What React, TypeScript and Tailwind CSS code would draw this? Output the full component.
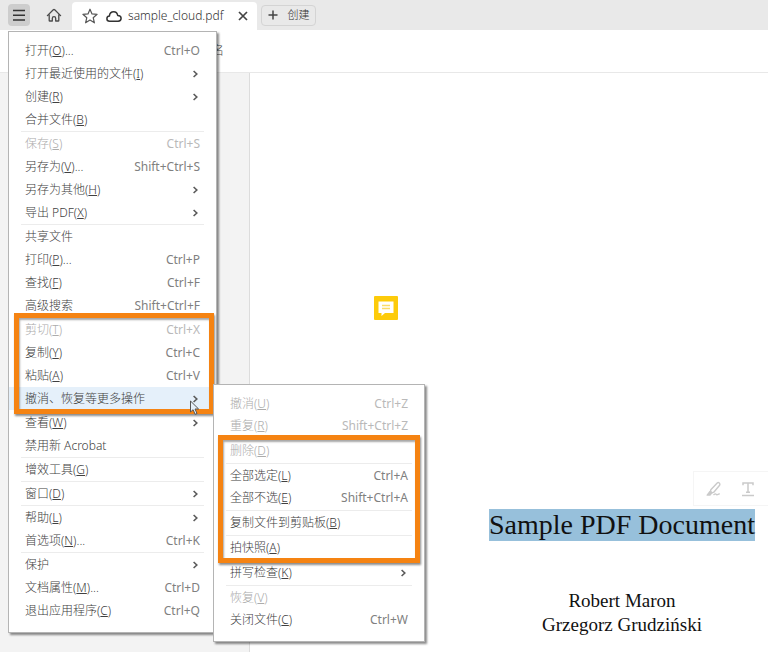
import React from 'react';
import { clsx } from 'clsx';

interface MenuEntry {
  label: string;
  accessKey?: string;
  suffix?: string;
  shortcut?: string;
  submenu?: boolean;
  disabled?: boolean;
  active?: boolean;
}

const fileMenu: MenuEntry[][] = [
  [
    { label: '打开', accessKey: 'O', suffix: '...', shortcut: 'Ctrl+O' },
    { label: '打开最近使用的文件', accessKey: 'I', submenu: true },
    { label: '创建', accessKey: 'R', submenu: true },
    { label: '合并文件', accessKey: 'B' },
  ],
  [
    { label: '保存', accessKey: 'S', shortcut: 'Ctrl+S', disabled: true },
    { label: '另存为', accessKey: 'V', suffix: '...', shortcut: 'Shift+Ctrl+S' },
    { label: '另存为其他', accessKey: 'H', submenu: true },
    { label: '导出 PDF', accessKey: 'X', submenu: true },
  ],
  [
    { label: '共享文件' },
    { label: '打印', accessKey: 'P', suffix: '...', shortcut: 'Ctrl+P' },
    { label: '查找', accessKey: 'F', shortcut: 'Ctrl+F' },
    { label: '高级搜索', shortcut: 'Shift+Ctrl+F' },
  ],
  [
    { label: '剪切', accessKey: 'T', shortcut: 'Ctrl+X', disabled: true },
    { label: '复制', accessKey: 'Y', shortcut: 'Ctrl+C' },
    { label: '粘贴', accessKey: 'A', shortcut: 'Ctrl+V' },
    { label: '撤消、恢复等更多操作', submenu: true, active: true },
  ],
  [
    { label: '查看', accessKey: 'W', submenu: true },
    { label: '禁用新 Acrobat' },
  ],
  [{ label: '增效工具', accessKey: 'G' }],
  [{ label: '窗口', accessKey: 'D', submenu: true }],
  [
    { label: '帮助', accessKey: 'L', submenu: true },
    { label: '首选项', accessKey: 'N', suffix: '...', shortcut: 'Ctrl+K' },
  ],
  [
    { label: '保护', submenu: true },
    { label: '文档属性', accessKey: 'M', suffix: '...', shortcut: 'Ctrl+D' },
    { label: '退出应用程序', accessKey: 'C', shortcut: 'Ctrl+Q' },
  ],
];

const editMenu: MenuEntry[][] = [
  [
    { label: '撤消', accessKey: 'U', shortcut: 'Ctrl+Z', disabled: true },
    { label: '重复', accessKey: 'R', shortcut: 'Shift+Ctrl+Z', disabled: true },
  ],
  [{ label: '删除', accessKey: 'D', disabled: true }],
  [
    { label: '全部选定', accessKey: 'L', shortcut: 'Ctrl+A' },
    { label: '全部不选', accessKey: 'E', shortcut: 'Shift+Ctrl+A' },
  ],
  [{ label: '复制文件到剪贴板', accessKey: 'B' }],
  [{ label: '拍快照', accessKey: 'A' }],
  [{ label: '拼写检查', accessKey: 'K', submenu: true }],
  [
    { label: '恢复', accessKey: 'V', disabled: true },
    { label: '关闭文件', accessKey: 'C', shortcut: 'Ctrl+W' },
  ],
];

const MenuItem: React.FC<{ entry: MenuEntry; rowClass: string }> = ({ entry, rowClass }) => (
  <button
    role="menuitem"
    disabled={entry.disabled}
    className={clsx(
      'flex w-full items-center justify-between px-4 text-xs whitespace-nowrap',
      rowClass,
      entry.disabled ? 'text-[#acacac]' : 'text-[#404040]',
      entry.active && 'bg-[#e5f0fa]',
    )}
  >
    <span>
      {entry.label}
      {entry.accessKey && (
        <>
          (<u>{entry.accessKey}</u>)
        </>
      )}
      {entry.suffix}
    </span>
    {entry.shortcut && (
      <span className={clsx('font-normal', entry.disabled ? 'text-[#b9b9b9]' : 'text-[#808080]')}>
        {entry.shortcut}
      </span>
    )}
    {entry.submenu && (
      <svg className="mr-0.5 h-2 w-1.5" viewBox="0 0 6 8" fill="none" stroke="#5a5a5a" strokeWidth="1.6">
        <path d="M1.6 1 4.8 4 1.6 7" />
      </svg>
    )}
  </button>
);

interface MenuProps {
  name: string;
  groups: MenuEntry[][];
  className: string;
  rowClass: string;
  dividerClass: string;
  children?: React.ReactNode;
}

const Menu: React.FC<MenuProps> = ({ name, groups, className, rowClass, dividerClass, children }) => (
  <div
    role="menu"
    aria-label={name}
    className={clsx(
      'absolute border border-[#b4b4b4] bg-white shadow-[2px_2px_2px_rgba(0,0,0,0.45)]',
      className,
    )}
  >
    {groups.map((group, i) => (
      <React.Fragment key={i}>
        {i > 0 && (
          <div className={dividerClass}>
            <hr className="border-[#ececec]" />
          </div>
        )}
        {group.map((entry) => (
          <MenuItem key={entry.label} entry={entry} rowClass={rowClass} />
        ))}
      </React.Fragment>
    ))}
    {children}
  </div>
);

// Orange frame drawn over a run of menu items
const Callout: React.FC<{ className: string }> = ({ className }) => (
  <div
    className={clsx(
      'pointer-events-none absolute border-[5px] border-[#f58312] shadow-[1px_2px_2px_rgba(0,0,0,0.45),inset_1px_2px_2px_rgba(0,0,0,0.35)]',
      className,
    )}
  />
);

const TabBar: React.FC = () => (
  <header className="flex h-[30px] items-center bg-[#e9e9e9] text-[#333]">
    <button aria-label="菜单" className="ml-2 flex h-[22px] w-[22px] items-center justify-center rounded-sm bg-[#cdcdcd]">
      <svg className="h-3.5 w-3.5" viewBox="0 0 14 14" stroke="#333" strokeWidth="1.6">
        <path d="M1 2.5h12M1 7.2h12M1 12h12" />
      </svg>
    </button>
    <button aria-label="主页" className="ml-4">
      <svg className="h-4 w-4" viewBox="0 0 16 16" fill="none" stroke="#4a4a4a" strokeWidth="1.3" strokeLinejoin="round" strokeLinecap="round">
        <path d="M1.4 8.6 7.3 2.8q.7-.6 1.4 0l5.900 5.800M3.200 7.400v6q0 .6.6.6h2.500v-2.600a1.700 1.700 0 0 1 3.400 0V14h2.500q.6 0 .6-.6v-6" />
      </svg>
    </button>
    <div className="ml-2.5 flex h-7 w-[185px] items-center self-end rounded-t-sm bg-white pr-2 pl-2.5">
      <svg className="h-4 w-4 shrink-0" viewBox="0 0 16 16" fill="none" stroke="#555" strokeWidth="1.2" strokeLinejoin="round">
        <path d="m8 1.200 2 4.700 5.100.4-3.900 3.400 1.200 5.100L8 12.100l-4.400 2.700 1.200-5.100L.9 6.300 6 5.900z" />
      </svg>
      <svg className="ml-2 h-4 w-4 shrink-0" viewBox="0 0 16 16" fill="none" stroke="#333" strokeWidth="1.5" strokeLinejoin="round">
        <path d="M3.600 13.200c-1.600 0-2.700-1.100-2.700-2.500 0-1.500 1.100-2.500 2.500-2.600C3.600 5.600 5.300 3.700 7.700 3.700c2 0 3.600 1.400 4 3.700 2 0 3.400 1.100 3.400 2.900 0 1.700-1.200 2.900-3 2.900z" />
      </svg>
      <span className="ml-1.5 text-xs">sample_cloud.pdf</span>
      <button aria-label="关闭" className="ml-auto flex h-3 w-3 items-center justify-center">
        <svg className="h-2.5 w-2.5" viewBox="0 0 10 10" stroke="#444" strokeWidth="1.7">
          <path d="m1 1 8 8M9 1 1 9" />
        </svg>
      </button>
    </div>
    <button className="ml-1 flex h-[21px] w-[55px] items-center justify-center gap-2.5 rounded-sm border border-[#d4d4d4] text-[11px]">
      <svg className="h-2.5 w-2.5" viewBox="0 0 10 10" stroke="#444" strokeWidth="1.5">
        <path d="M5 .5v9M.5 5h9" />
      </svg>
      创建
    </button>
  </header>
);

const SelectionToolbar: React.FC = () => (
  <div className="absolute top-[398px] right-0 flex h-[35px] w-[75px] items-center justify-between border border-r-0 border-[#f5f5f5] px-3">
    <button aria-label="高亮">
      <svg className="h-4 w-4" viewBox="0 0 16 16" fill="none" stroke="#cacaca" strokeWidth="1.4" strokeLinejoin="round">
        <path d="M4.800 8.800 11.200 2q1-.9 2.100 0t.3 2.300L7.800 11.200l-1.700.6-1.600-1.300z" />
        <path d="m4 10.400-2.800 3.700H4l1.800-2.300z" fill="#cacaca" />
        <path d="M7.500 14c1.500-1.500 2.200-1.200 2.600-.7.500.7 1.600.6 3.600-.6" />
      </svg>
    </button>
    <button aria-label="下划线">
      <svg className="h-4 w-4" viewBox="0 0 16 16" fill="none" stroke="#cacaca" strokeWidth="1.5">
        <path d="M3 4.200V2h10v2.200M8 2v9.200M6 11.200h4M2 14.600h12" />
      </svg>
    </button>
  </div>
);

const DocumentPage: React.FC = () => (
  <main className="relative flex-1 border-l border-[#dcdcdc] bg-white font-['Liberation_Serif',serif] text-[#111]">
    <button aria-label="注释" className="absolute top-[223px] left-[124px]">
      <svg className="h-6 w-6" viewBox="0 0 24 24">
        <rect width="24" height="24" rx="1" fill="#fdcb0a" />
        <path d="M4.500 5.500h15v11.500h-8.500l-3.500 3v-3h-3z" fill="#fff" />
        <path d="M8 9.500h8M8 12.500h8" stroke="#fbdc68" strokeWidth="1.3" />
      </svg>
    </button>
    <SelectionToolbar />
    <div className="ml-[239px] w-[266px] pt-[436px] text-center whitespace-nowrap">
      <h1 className="bg-[#97c0db] text-[28px] leading-8">Sample PDF Document</h1>
      <div className="mt-12 text-[19px] leading-6">
        <p>Robert Maron</p>
        <p>Grzegorz Grudziński</p>
      </div>
    </div>
  </main>
);

const App: React.FC = () => (
  <div className="relative flex min-h-screen flex-col overflow-hidden bg-white font-['Noto_Sans','Noto_Sans_CJK_SC',sans-serif] font-light">
    <TabBar />
    <nav className="flex h-[43px] items-center border-b border-[#e8e8e8] pl-[212px] text-xs text-[#444]">
      <span>名</span>
    </nav>
    <div className="flex flex-1">
      <aside className="w-[249px] shrink-0 bg-[#f3f3f3]" />
      <DocumentPage />
    </div>

    <Menu
      name="文件"
      groups={fileMenu}
      className="top-[31px] left-2 w-[209px] pt-[7px] pb-2.5"
      rowClass="h-[23px]"
      dividerClass="h-px px-3"
    >
      <Callout className="top-[281px] left-[5px] h-[101px] w-[200px]" />
      <svg className="absolute top-[368px] left-[180px] h-4 w-3" viewBox="0 0 12 16" fill="#e5f0fa" stroke="#555" strokeWidth="1">
        <path d="M1.500 1v11l2.600-2.300 2 4.600 1.900-.8-2-4.500h3.600z" />
      </svg>
    </Menu>
    <Menu
      name="编辑"
      groups={editMenu}
      className="top-[384px] left-[213px] w-[212px] pt-2 pb-2.5"
      rowClass="h-[22px]"
      dividerClass="h-[3px] px-3 py-px"
    >
      <Callout className="top-[50px] left-1 h-[128px] w-[202px]" />
    </Menu>
  </div>
);

export default App;
